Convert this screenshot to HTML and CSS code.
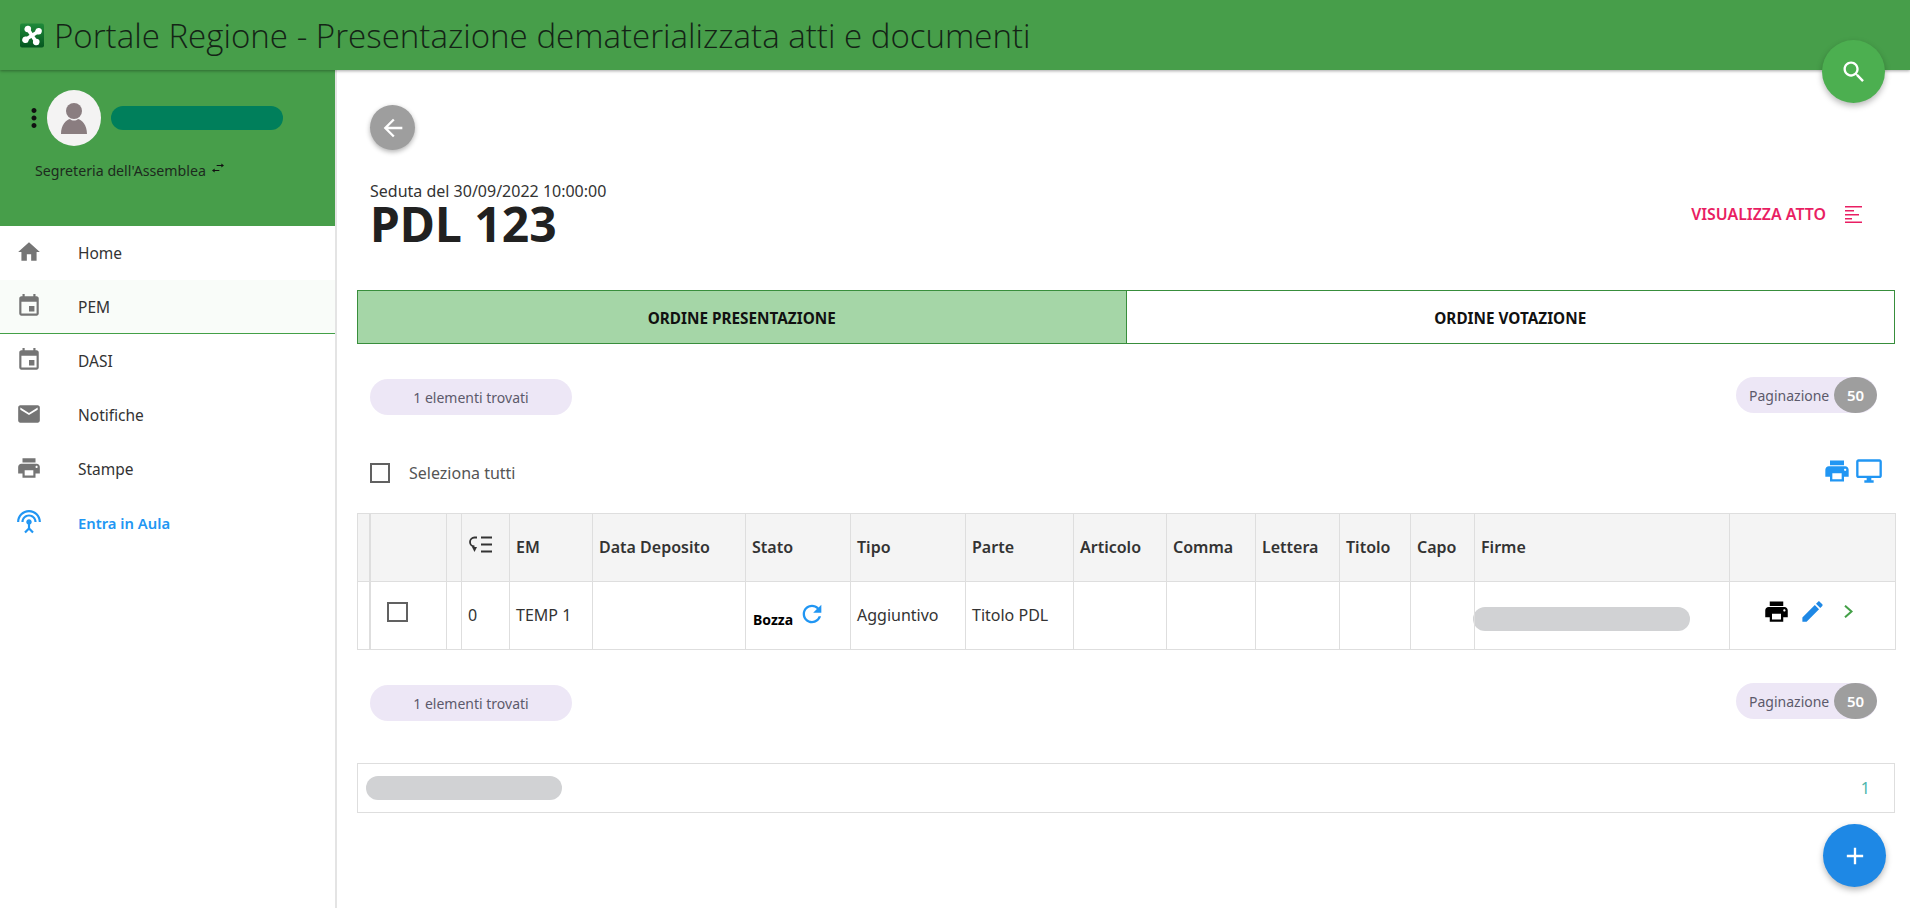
FILE: index.html
```html
<!DOCTYPE html>
<html lang="it">

<head>
    <meta charset="UTF-8">
    <title>Portale Regione - Presentazione dematerializzata atti e documenti</title>
    <link rel="stylesheet" href="styles.css">
</head>

<body>

    <header class="topbar">
        <svg class="logo" viewBox="0 0 24 24">
            <defs>
                <linearGradient id="logoGreen" x1="0" y1="0" x2="0" y2="1">
                    <stop offset="0" stop-color="#1f8a3a" />
                    <stop offset="1" stop-color="#04561f" />
                </linearGradient>
            </defs>
            <rect width="24" height="24" rx="2" fill="url(#logoGreen)" />
            <g transform="rotate(12 12 12)">
                <path d="M7 7l10 10M17 7L7 17" stroke="#fff" stroke-width="3.6" />
                <circle cx="6.5" cy="6.5" r="3.3" fill="#fff" />
                <circle cx="17.5" cy="6.5" r="3.3" fill="#fff" />
                <circle cx="6.5" cy="17.5" r="3.3" fill="#fff" />
                <circle cx="17.5" cy="17.5" r="3.3" fill="#fff" />
            </g>
        </svg>
        <h1 class="app-title">Portale Regione - Presentazione dematerializzata atti e documenti</h1>
    </header>

    <button class="fab fab-search">
        <svg viewBox="0 0 24 24"><path d="M15.5 14h-.79l-.28-.27C15.41 12.59 16 11.11 16 9.5 16 5.91 13.09 3 9.5 3S3 5.91 3 9.5 5.91 16 9.5 16c1.61 0 3.09-.59 4.23-1.57l.27.28v.79l5 4.99L20.49 19l-4.99-5zm-6 0C7.01 14 5 11.99 5 9.5S7.01 5 9.5 5 14 7.01 14 9.5 11.99 14 9.5 14z" /></svg>
    </button>

    <div class="layout">

        <aside class="sidebar">
            <div class="user-panel">
                <div class="user-row">
                    <svg class="user-menu" viewBox="0 0 24 24"><path d="M12 8c1.1 0 2-.9 2-2s-.9-2-2-2-2 .9-2 2 .9 2 2 2zm0 2c-1.1 0-2 .9-2 2s.9 2 2 2 2-.9 2-2-.9-2-2-2zm0 6c-1.1 0-2 .9-2 2s.9 2 2 2 2-.9 2-2-.9-2-2-2z" /></svg>
                    <div class="avatar">
                        <svg viewBox="0 0 54 56">
                            <circle cx="27" cy="21" r="8" />
                            <path d="M14 44c0-9 5-14 9-15 2 2 6 2 8 0 4 1 9 6 9 15z" />
                        </svg>
                    </div>
                    <div class="user-name"></div>
                </div>
                <div class="user-role">
                    <span>Segreteria dell'Assemblea</span>
                    <svg viewBox="0 0 24 24" preserveAspectRatio="none"><path d="M6.99 13L3 17l3.99 4v-3H14v-2H6.99v-3zM21 7l-3.99-4v3H10v2h7.01v3L21 7z" /></svg>
                </div>
            </div>

            <nav class="menu">
                <a class="menu-item">
                    <svg viewBox="0 0 24 24"><path d="M10 20v-6h4v6h5v-8h3L12 3 2 12h3v8z" /></svg>
                    Home
                </a>
                <a class="menu-item selected">
                    <svg viewBox="0 0 24 24"><path d="M17 12h-5v5h5v-5zM16 1v2H8V1H6v2H5c-1.11 0-1.99.9-1.99 2L3 19c0 1.1.89 2 2 2h14c1.1 0 2-.9 2-2V5c0-1.1-.9-2-2-2h-1V1h-2zm3 18H5V8h14v11z" /></svg>
                    PEM
                </a>
                <a class="menu-item">
                    <svg viewBox="0 0 24 24"><path d="M17 12h-5v5h5v-5zM16 1v2H8V1H6v2H5c-1.11 0-1.99.9-1.99 2L3 19c0 1.1.89 2 2 2h14c1.1 0 2-.9 2-2V5c0-1.1-.9-2-2-2h-1V1h-2zm3 18H5V8h14v11z" /></svg>
                    DASI
                </a>
                <a class="menu-item">
                    <svg viewBox="0 0 24 24"><path d="M20 4H4c-1.1 0-1.99.9-1.99 2L2 18c0 1.1.9 2 2 2h16c1.1 0 2-.9 2-2V6c0-1.1-.9-2-2-2zm0 4l-8 5-8-5V6l8 5 8-5v2z" /></svg>
                    Notifiche
                </a>
                <a class="menu-item">
                    <svg viewBox="0 0 24 24"><path d="M19 8H5c-1.66 0-3 1.34-3 3v6h4v4h12v-4h4v-6c0-1.66-1.34-3-3-3zm-3 11H8v-5h8v5zm3-7c-.55 0-1-.45-1-1s.45-1 1-1 1 .45 1 1-.45 1-1 1zm-1-9H6v4h12V3z" /></svg>
                    Stampe
                </a>
                <a class="menu-item live">
                    <svg viewBox="0 0 24 24"><path d="M12 5c-3.87 0-7 3.13-7 7h2c0-2.76 2.24-5 5-5s5 2.24 5 5h2c0-3.87-3.13-7-7-7zm1 9.29c.88-.39 1.5-1.26 1.5-2.29 0-1.38-1.12-2.5-2.5-2.5S9.5 10.62 9.5 12c0 1.02.62 1.9 1.5 2.29v3.3L7.59 21 9 22.41l3-3 3 3L16.41 21 13 17.59v-3.3zM12 1C5.93 1 1 5.93 1 12h2c0-4.97 4.03-9 9-9s9 4.03 9 9h2c0-6.07-4.93-11-11-11z" /></svg>
                    Entra in Aula
                </a>
            </nav>
        </aside>

        <main class="content">

            <button class="back-btn">
                <svg viewBox="0 0 24 24"><path d="M20 11H7.83l5.59-5.59L12 4l-8 8 8 8 1.41-1.41L7.83 13H20v-2z" /></svg>
            </button>

            <div class="page-head">
                <div>
                    <div class="session">Seduta del 30/09/2022 10:00:00</div>
                    <div class="act-title">PDL 123</div>
                </div>
                <a class="act-link">
                    VISUALIZZA ATTO
                    <svg viewBox="0 0 17 17">
                        <path d="M0 .75h17M0 4.75h9M0 8.75h14M0 12.75h7M0 16.25h17" stroke="#e91e63" stroke-width="1.5" />
                    </svg>
                </a>
            </div>

            <div class="tabs">
                <div class="tab active">ORDINE PRESENTAZIONE</div>
                <div class="tab">ORDINE VOTAZIONE</div>
            </div>

            <div class="pill-row">
                <span class="pill pill-count">1 elementi trovati</span>
                <span class="pill pill-pages">Paginazione <b class="pill-num">50</b></span>
            </div>

            <div class="select-row">
                <label class="select-all"><span class="checkbox"></span>Seleziona tutti</label>
                <div class="view-icons">
                    <svg class="ic-print" viewBox="0 0 24 24"><path d="M19 8H5c-1.66 0-3 1.34-3 3v6h4v4h12v-4h4v-6c0-1.66-1.34-3-3-3zm-3 11H8v-5h8v5zm3-7c-.55 0-1-.45-1-1s.45-1 1-1 1 .45 1 1-.45 1-1 1zm-1-9H6v4h12V3z" /></svg>
                    <svg class="ic-screen" viewBox="0 0 24 24"><path d="M21 2H3c-1.1 0-2 .9-2 2v12c0 1.1.9 2 2 2h7v2H8v2h8v-2h-2v-2h7c1.1 0 2-.9 2-2V4c0-1.1-.9-2-2-2zm0 14H3V4h18v12z" /></svg>
                </div>
            </div>

            <table class="grid">
                <colgroup>
                    <col class="c-grip">
                    <col class="c-check">
                    <col class="c-gap">
                    <col class="c-order">
                    <col class="c-em">
                    <col class="c-date">
                    <col class="c-state">
                    <col class="c-type">
                    <col class="c-part">
                    <col class="c-art">
                    <col class="c-comma">
                    <col class="c-letter">
                    <col class="c-title">
                    <col class="c-chapter">
                    <col class="c-sign">
                    <col class="c-actions">
                </colgroup>
                <thead>
                    <tr>
                        <th class="grip"></th>
                        <th></th>
                        <th></th>
                        <th>
                            <svg class="ic-order" viewBox="0 0 23 17" fill="none" stroke="#333" stroke-width="1.8">
                                <path d="M8 1.5H5.5C3 1.5 1 3.5 1 6s2 4.5 4.5 4.5" />
                                <path d="M3 11h5l-2.5 5z" fill="#333" stroke="none" />
                                <path d="M12 1.5h11M12 8.5h11M12 15.5h11" />
                            </svg>
                        </th>
                        <th>EM</th>
                        <th>Data Deposito</th>
                        <th>Stato</th>
                        <th>Tipo</th>
                        <th>Parte</th>
                        <th>Articolo</th>
                        <th>Comma</th>
                        <th>Lettera</th>
                        <th>Titolo</th>
                        <th>Capo</th>
                        <th>Firme</th>
                        <th></th>
                    </tr>
                </thead>
                <tbody>
                    <tr>
                        <td class="grip"></td>
                        <td class="check-cell"><span class="checkbox"></span></td>
                        <td></td>
                        <td>0</td>
                        <td>TEMP 1</td>
                        <td></td>
                        <td>
                            <div class="state">
                                <b>Bozza</b>
                                <svg viewBox="0 0 24 24"><path d="M17.65 6.35C16.2 4.9 14.21 4 12 4c-4.42 0-7.99 3.58-7.99 8s3.57 8 7.99 8c3.73 0 6.84-2.55 7.73-6h-2.08c-.82 2.33-3.04 4-5.65 4-3.31 0-6-2.69-6-6s2.69-6 6-6c1.66 0 3.14.69 4.22 1.78L13 11h7V4l-2.35 2.35z" /></svg>
                            </div>
                        </td>
                        <td>Aggiuntivo</td>
                        <td>Titolo PDL</td>
                        <td></td>
                        <td></td>
                        <td></td>
                        <td></td>
                        <td></td>
                        <td class="sign-cell"><div class="redacted sign-name"></div></td>
                        <td>
                            <div class="row-actions">
                                <svg class="ic-black" viewBox="0 0 24 24"><path d="M19 8H5c-1.66 0-3 1.34-3 3v6h4v4h12v-4h4v-6c0-1.66-1.34-3-3-3zm-3 11H8v-5h8v5zm3-7c-.55 0-1-.45-1-1s.45-1 1-1 1 .45 1 1-.45 1-1 1zm-1-9H6v4h12V3z" /></svg>
                                <svg class="ic-edit" viewBox="0 0 24 24"><path d="M3 17.25V21h3.75L17.81 9.94l-3.75-3.75L3 17.25zM20.71 7.04c.39-.39.39-1.02 0-1.41l-2.34-2.34c-.39-.39-1.02-.39-1.41 0l-1.83 1.83 3.75 3.75 1.83-1.83z" /></svg>
                                <svg class="ic-next" viewBox="0 0 9 13" fill="none"><path d="M1 .7L7.5 6.5 1 12.3" stroke="#43a047" stroke-width="2" /></svg>
                            </div>
                        </td>
                    </tr>
                </tbody>
            </table>

            <div class="pill-row pill-row-bottom">
                <span class="pill pill-count">1 elementi trovati</span>
                <span class="pill pill-pages">Paginazione <b class="pill-num">50</b></span>
            </div>

            <div class="pager">
                <div class="redacted pager-name"></div>
                <span class="pager-num">1</span>
            </div>

        </main>
    </div>

    <button class="fab fab-add">
        <svg viewBox="0 0 24 24"><path d="M19 13h-6v6h-2v-6H5v-2h6V5h2v6h6v2z" /></svg>
    </button>

</body>

</html>
```

FILE: styles.css
```css
* {
    box-sizing: border-box;
}

html,
body {
    height: 100%;
}

body {
    margin: 0;
    overflow: hidden;
    font-family: 'Noto Sans', 'Open Sans', sans-serif;
    font-size: 16px;
    color: #333;
    background-color: #fff;
}

svg {
    display: block;
    flex-shrink: 0;
}

.topbar {
    position: relative;
    z-index: 2;
    display: flex;
    align-items: center;
    height: 70px;
    padding: 0 0 0 20px;
    background-color: #479e4a;
    box-shadow: 0 1px 3px rgba(0, 0, 0, 0.35);
}

.logo {
    width: 24px;
    height: 25px;
}

.app-title {
    margin: 0 0 0 10px;
    font-family: 'Open Sans', 'Noto Sans', sans-serif;
    font-size: 33.1px;
    font-weight: 300;
    color: #142416;
    white-space: nowrap;
}

.layout {
    display: flex;
    height: 838px;
}

/* sidebar */
.sidebar {
    flex: 0 0 337px;
    border-right: 2px solid #e4e4e4;
}

.user-panel {
    height: 156px;
    padding: 20px 0 0 26px;
    background-color: #479e4a;
}

.user-row {
    display: flex;
    align-items: center;
}

.user-menu {
    width: 30px;
    height: 30px;
    margin-right: -2px;
    margin-left: -7px;
    fill: #111;
}

.avatar {
    width: 54px;
    height: 56px;
    border-radius: 50%;
    background-color: #f4f3f3;
}

.avatar svg {
    width: 54px;
    height: 56px;
    fill: #8a7d80;
}

.user-name {
    width: 172px;
    height: 24px;
    margin-left: 10px;
    border-radius: 12px;
    background-color: #007f5b;
}

.user-role {
    display: flex;
    align-items: center;
    margin: 15px 0 0 9px;
    font-size: 14.2px;
    color: #1d2a1e;
}

.user-role svg {
    width: 16px;
    height: 12px;
    margin: -6px 0 0 4px;
    fill: #111;
}

.menu-item {
    display: flex;
    align-items: center;
    height: 54px;
    padding: 0 0 1px 17px;
    font-size: 15.5px;
    color: #333;
}

.menu-item svg {
    width: 26px;
    height: 26px;
    margin: -1px 36px 0 -1px;
    fill: #757575;
}

.menu-item.selected {
    background-color: #f9fcf9;
    border-bottom: 1px solid #43a047;
    padding-bottom: 0;
}

.menu-item.live {
    font-size: 14.8px;
    font-weight: 600;
    color: #2196f3;
}

.menu-item.live svg {
    fill: #2196f3;
}

/* main column */
.content {
    flex: 1;
    min-width: 0;
    padding: 35px 15px 0 20px;
}

.back-btn {
    display: flex;
    align-items: center;
    justify-content: center;
    width: 45px;
    height: 45px;
    margin-left: 13px;
    padding: 0;
    border: none;
    border-radius: 50%;
    background-color: #9e9e9e;
    box-shadow: 0 2px 5px rgba(0, 0, 0, 0.3);
}

.back-btn svg {
    width: 28px;
    height: 28px;
    fill: #fff;
}

.page-head {
    display: flex;
    align-items: center;
    justify-content: space-between;
    height: 66px;
    margin: 30px 33px 0 13px;
}

.session {
    height: 22px;
    font-size: 16px;
    line-height: 22px;
    color: #333;
}

.act-title {
    height: 44px;
    font-size: 48px;
    font-weight: 700;
    line-height: 44px;
    color: #212121;
}

.act-link {
    display: flex;
    align-items: center;
    gap: 19px;
    margin-top: 2px;
    font-size: 15.9px;
    font-weight: 600;
    color: #e91e63;
}

.act-link svg {
    width: 17px;
    height: 17px;
}

.tabs {
    display: flex;
    height: 54px;
    margin-top: 44px;
    border: 1px solid #388e3c;
}

.tab {
    display: flex;
    flex: 1;
    align-items: center;
    justify-content: center;
    padding-top: 1px;
    font-size: 15.3px;
    font-weight: 700;
    color: #111;
}

.tab.active {
    border-right: 1px solid #388e3c;
    background-color: #a5d6a7;
}

.pill-row {
    display: flex;
    align-items: flex-start;
    justify-content: space-between;
    height: 38px;
    margin-top: 33px;
    padding: 0 18px 0 13px;
}

.pill-row-bottom {
    margin-top: 33px;
}

.pill {
    display: flex;
    align-items: center;
    height: 36px;
    border-radius: 18px;
    font-size: 14px;
    color: #5c5a6b;
    background-color: #ede7f6;
}

.pill-count {
    justify-content: center;
    width: 202px;
    margin-top: 2px;
}

.pill-pages {
    width: 141px;
    padding-left: 13px;
    justify-content: space-between;
}

.pill-num {
    display: flex;
    align-items: center;
    justify-content: center;
    width: 43px;
    height: 36px;
    border-radius: 50%;
    font-size: 15px;
    font-weight: 600;
    color: #fff;
    background-color: #9e9e9e;
}

.select-row {
    display: flex;
    align-items: center;
    justify-content: space-between;
    height: 24px;
    margin-top: 46px;
    padding: 0 12px 0 13px;
}

.select-all {
    display: flex;
    align-items: center;
    gap: 19px;
    font-size: 16px;
    color: #555;
}

.checkbox {
    display: block;
    width: 20px;
    height: 20px;
    border: 2px solid #616161;
}

.view-icons {
    display: flex;
    align-items: center;
    gap: 4px;
    margin-top: -5px;
}

.ic-print,
.ic-screen {
    width: 28px;
    height: 28px;
    fill: #2196f3;
}

/* table */
.grid {
    width: 1538px;
    margin-top: 28px;
    border-collapse: collapse;
    table-layout: fixed;
    font-size: 16px;
}

.grid th,
.grid td {
    padding: 0 0 2px 6px;
    border: 1px solid #dedede;
    text-align: left;
    white-space: nowrap;
}

.grid th {
    height: 68px;
    font-size: 16px;
    font-weight: 600;
    color: #333;
    background-color: #f4f4f4;
}

.grid td {
    height: 68px;
    color: #333;
}

.grid .grip {
    padding: 0;
    border-right-width: 2px;
}

.c-grip { width: 12px; }
.c-check { width: 77px; }
.c-gap { width: 15px; }
.c-order { width: 48px; }
.c-em { width: 83px; }
.c-date { width: 153px; }
.c-state { width: 105px; }
.c-type { width: 115px; }
.c-part { width: 108px; }
.c-art { width: 93px; }
.c-comma { width: 89px; }
.c-letter { width: 84px; }
.c-title { width: 71px; }
.c-chapter { width: 64px; }
.c-sign { width: 255px; }
.c-actions { width: 166px; }

.ic-order {
    width: 23px;
    height: 17px;
    margin-top: -5px;
    margin-left: 1px;
}

.grid .check-cell {
    padding-left: 16px;
}

.check-cell .checkbox {
    width: 21px;
    height: 20px;
    margin-top: -6px;
}

.state {
    display: flex;
    align-items: flex-start;
    gap: 5px;
    margin-left: 1px;
}

.state b {
    margin-top: 10px;
    font-size: 14px;
    color: #000;
}

.state svg {
    width: 28px;
    height: 28px;
    fill: #2196f3;
}

.redacted {
    height: 24px;
    border-radius: 12px;
    background-color: #d1d2d4;
}

.grid .sign-cell {
    padding: 0 0 2px;
}

.sign-name {
    width: 217px;
    margin: 9px 0 0 -2px;
}

.row-actions {
    display: flex;
    align-items: center;
    margin: -6px 0 0 27px;
}

.row-actions svg {
    width: 27px;
    height: 27px;
}

.ic-black {
    fill: #000;
}

.ic-edit {
    margin-left: 9px;
    fill: #1e88e5;
}

.row-actions .ic-next {
    width: 9px;
    height: 13px;
    margin-left: 18px;
}

.pager {
    display: flex;
    align-items: center;
    justify-content: space-between;
    height: 50px;
    margin-top: 42px;
    padding: 0 24px 0 8px;
    border: 1px solid #dedede;
}

.pager-name {
    width: 196px;
}

.pager-num {
    color: #4db6ac;
}

/* round buttons laid over the page */
.fab {
    position: absolute;
    z-index: 3;
    display: flex;
    align-items: center;
    justify-content: center;
    width: 63px;
    height: 63px;
    padding: 0;
    border: none;
    border-radius: 50%;
    box-shadow: 0 3px 6px rgba(0, 0, 0, 0.28);
}

.fab svg {
    width: 28px;
    height: 28px;
    fill: #fff;
}

.fab-search {
    top: 40px;
    left: 1822px;
    background-color: #4caf50;
}

.fab-add {
    top: 824px;
    left: 1823px;
    background-color: #1e88e5;
}
```
